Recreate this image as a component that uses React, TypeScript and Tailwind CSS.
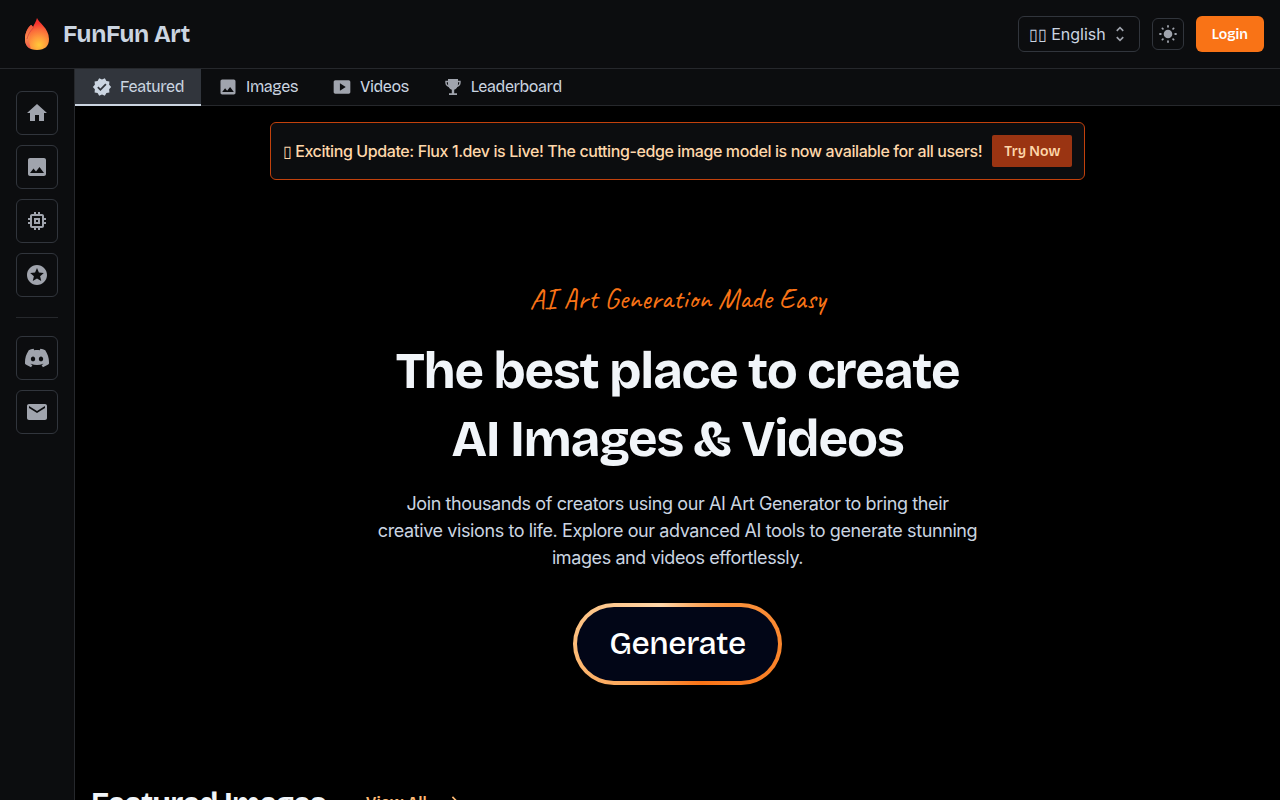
import { useState } from "react";
import {
  MdArrowForward,
  MdEmail,
  MdHome,
  MdImage,
  MdMemory,
  MdSmartDisplay,
  MdStars,
  MdUnfoldMore,
  MdVerified,
} from "react-icons/md";
import { SiDiscord } from "react-icons/si";

const tabs = [
  { name: "Featured", icon: MdVerified },
  { name: "Images", icon: MdImage },
  { name: "Videos", icon: MdSmartDisplay },
  { name: "Leaderboard", icon: Trophy },
];

const pages = [
  { name: "Home", icon: MdHome },
  { name: "Images", icon: MdImage },
  { name: "Models", icon: MdMemory },
  { name: "Favorites", icon: MdStars },
];

const contacts = [
  { name: "Discord", icon: SiDiscord },
  { name: "Email", icon: MdEmail },
];

export default function App() {
  const [tab, setTab] = useState("Featured");

  return (
    <div className="flex h-screen flex-col bg-black font-['Bricolage_Grotesque','Inter',sans-serif] text-base tracking-tight text-[#cbd5e1]">
      <Header />
      <div className="flex min-h-0 flex-1">
        <aside className="flex shrink-0 flex-col border-r border-[#26282c] bg-[#0c0d0f] px-4 pt-[22px]">
          <nav className="flex flex-col gap-[10px]">
            {pages.map((item) => (
              <SideLink key={item.name} {...item} />
            ))}
          </nav>
          <hr className="mt-5 mb-[18px] border-[#26282c]" />
          <div className="flex flex-col gap-[10px]">
            {contacts.map((item) => (
              <SideLink key={item.name} {...item} />
            ))}
          </div>
        </aside>

        <div className="flex min-w-0 flex-1 flex-col">
          <nav className="flex shrink-0 border-b border-[#26282c] bg-[#0c0d0f]">
            {tabs.map(({ name, icon: Icon }) => (
              <button
                key={name}
                onClick={() => setTab(name)}
                className={
                  tab === name
                    ? "-mb-px flex h-[37px] items-center gap-2 border-b-2 border-[#cbd5e1] bg-[#31353c] px-[17px]"
                    : "flex h-9 items-center gap-2 px-[17px]"
                }
              >
                <Icon className={tab === name ? "size-5" : "size-5 text-[#a0a4ad]"} />
                {name}
              </button>
            ))}
          </nav>

          <main className="flex flex-1 flex-col overflow-y-auto [scrollbar-width:none]">
            <Banner />
            <Hero />
            <section className="px-4 pb-8">
              <div className="flex items-center gap-10">
                <h2 className="text-3xl font-bold tracking-tight text-[#f1f5f9]">Featured Images</h2>
                <a
                  href="#images"
                  className="flex items-center gap-4 text-base font-semibold tracking-normal text-[#fdba74]"
                >
                  View All
                  <MdArrowForward className="size-5" />
                </a>
              </div>
            </section>
          </main>
        </div>
      </div>
    </div>
  );
}

function Header() {
  return (
    <header className="flex h-[69px] shrink-0 items-center justify-between border-b border-[#26282c] bg-[#0c0d0f] px-4">
      <a href="#home" className="flex items-center gap-[5px]">
        <Flame />
        <span className="text-2xl font-bold">FunFun Art</span>
      </a>
      <div className="flex items-center gap-3">
        <div className="relative">
          <select
            aria-label="Language"
            className="h-9 w-[122px] appearance-none rounded-md border border-[#31353c] bg-[#0c0d0f] pl-[10px] font-['Inter',sans-serif] text-base tracking-normal"
          >
            <option>▯▯ English</option>
            <option>▯▯ Español</option>
          </select>
          <MdUnfoldMore className="pointer-events-none absolute top-2 right-[10px] size-5 text-[#a0a4ad]" />
        </div>
        <button
          aria-label="Toggle theme"
          className="flex size-8 items-center justify-center rounded-md border border-[#31353c] text-[#a0a4ad]"
        >
          <Sun />
        </button>
        <button className="h-9 rounded-md bg-[#f97316] px-4 pt-0.5 text-sm font-semibold tracking-normal text-white">
          Login
        </button>
      </div>
    </header>
  );
}

function SideLink({ name, icon: Icon }: { name: string; icon: any }) {
  return (
    <a
      href={`#${name.toLowerCase()}`}
      aria-label={name}
      className="flex h-11 w-[42px] items-center justify-center rounded-md border border-[#31353c] text-[#a0a4ad]"
    >
      <Icon className="size-6" />
    </a>
  );
}

function Banner() {
  return (
    <div className="mx-auto mt-4 flex items-center gap-[10px] rounded-md border border-[#c2410c] bg-[#0c0d0f] p-3">
      <p className="font-['Inter',sans-serif] font-medium text-[#fed7aa]">
        ▯ Exciting Update: Flux 1.dev is Live! The cutting-edge image model is now available for all users!
      </p>
      <button className="h-8 rounded-xs bg-[#9a3412] px-3 pt-0.5 text-sm font-semibold tracking-normal text-[#fed7aa]">
        Try Now
      </button>
    </div>
  );
}

function Hero() {
  return (
    <section className="flex flex-col items-center px-4 pt-[99px] pb-[100px] text-center">
      <p className="font-['Caveat',cursive] text-[29px] leading-10 tracking-normal text-[#f97316]">
        AI Art Generation Made Easy
      </p>
      <h1 className="mt-[19px] text-[51px] leading-[68px] font-bold tracking-tight text-[#f1f5f9]">
        The best place to create
        <br />
        AI Images &amp; Videos
      </h1>
      <p className="mt-4 max-w-[608px] font-['Inter',sans-serif] text-lg leading-[27px]">
        Join thousands of creators using our AI Art Generator to bring their creative visions to life. Explore our
        advanced AI tools to generate stunning images and videos effortlessly.
      </p>
      <button className="mt-8 rounded-full bg-[conic-gradient(from_335deg,#fed7aa,#fb923c_22%,#f97316_48%,#fdba74_80%,#fed7aa)] p-1">
        <span className="flex h-[74px] items-center rounded-full bg-[#020617] px-8 text-[32px] font-medium text-white">
          Generate
        </span>
      </button>
    </section>
  );
}

function Sun() {
  return (
    <svg viewBox="0 0 20 20" className="size-5" fill="currentColor" stroke="currentColor" strokeLinecap="round">
      <circle cx="10" cy="10" r="4.3" stroke="none" />
      <path
        strokeWidth="1.8"
        d="M10 2v.8M10 17.2v.8M2 10h.8M17.2 10h.8M4.4 4.4l.5.5M15.1 15.1l.5.5M4.4 15.6l.5-.5M15.1 4.9l.5-.5"
      />
    </svg>
  );
}

function Trophy({ className }: { className?: string }) {
  return (
    <svg viewBox="0 0 20 20" className={className} fill="currentColor">
      <path d="M5 2h10v5c0 3-1.5 5.2-3.8 5.7v3.5H14V18H6v-1.8h2.8v-3.5C6.5 12.2 5 10 5 7V2z" />
      <path
        d="M6 4.500H3v1c0 2.200 1.200 3.500 3.500 4M14 4.500h3v1c0 2.200-1.200 3.500-3.500 4"
        fill="none"
        stroke="currentColor"
        strokeWidth="1.4"
      />
    </svg>
  );
}

function Flame() {
  return (
    <svg viewBox="0 -1 42 42" className="size-[42px]">
      <defs>
        <radialGradient id="flame-core" cx="23" cy="31" r="22" gradientUnits="userSpaceOnUse">
          <stop offset="0" stopColor="#ffc938" />
          <stop offset="0.35" stopColor="#ff9b3c" />
          <stop offset="0.7" stopColor="#fb6a3a" />
          <stop offset="1" stopColor="#f8312f" />
        </radialGradient>
        <linearGradient id="flame-side" x1="14" y1="10" x2="16" y2="36" gradientUnits="userSpaceOnUse">
          <stop offset="0" stopColor="#f0523c" />
          <stop offset="0.5" stopColor="#f98a4c" />
          <stop offset="1" stopColor="#f0504e" />
        </linearGradient>
      </defs>
      <path
        d="M21 4c1 4 12 10 12 21 0 7-4 11-12 11S9 32 9 25c0-6 3-12 6-14 1 0 1 1 2 2 1-3 3-5 4-9z"
        fill="url(#flame-core)"
      />
      <path d="M15 11c-3 2-6 8-6 14 0 5 2 8 6 10-3-8-2-15 2-22-1-1-1-2-2-2z" fill="url(#flame-side)" />
      <path d="M18 13c-4 4-6 8-7 12" fill="none" stroke="#d9483a" strokeWidth="0.8" />
    </svg>
  );
}
